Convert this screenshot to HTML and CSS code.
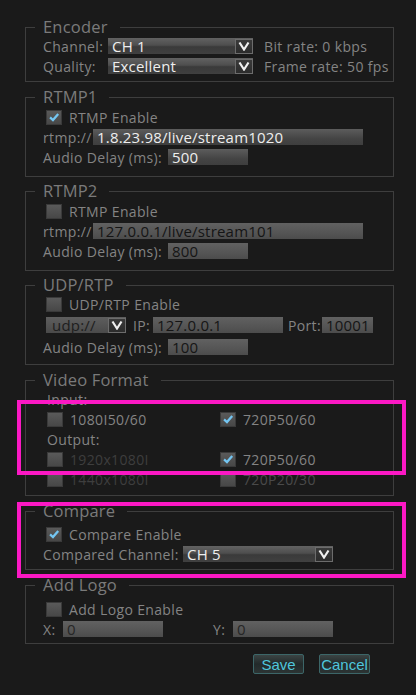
FILE: index.html
```html
<!DOCTYPE html>
<html>
<head>
<meta charset="utf-8">
<link rel="stylesheet" href="styles.css">
</head>
<body>
<div class="panel">
  <fieldset class="group g-enc">
    <legend>Encoder</legend>
    <div class="row">
      <span class="lbl w-ch">Channel:</span>
      <div class="select s-enc"><span class="val">CH 1</span><span class="arrow"><svg viewBox="0 0 12 10" width="12" height="10"><path d="M1.5 1.5 L6 8.5 L10.5 1.5" fill="none" stroke="#f0f0f0" stroke-width="2.2"/></svg></span></div>
      <span class="lbl info">Bit rate: 0 kbps</span>
    </div>
    <div class="row">
      <span class="lbl w-ch">Quality:</span>
      <div class="select s-enc"><span class="val">Excellent</span><span class="arrow"><svg viewBox="0 0 12 10" width="12" height="10"><path d="M1.5 1.5 L6 8.5 L10.5 1.5" fill="none" stroke="#f0f0f0" stroke-width="2.2"/></svg></span></div>
      <span class="lbl info">Frame rate: 50 fps</span>
    </div>
  </fieldset>

  <fieldset class="group g-rtmp">
    <legend>RTMP1</legend>
    <div class="row chkrow"><span class="chk on"><svg viewBox="0 0 16 16" width="16" height="16"><path d="M3.5 8.5 L6.8 11.5 L12.8 4.5" fill="none" stroke="#74c6f2" stroke-width="2.6"/></svg></span><span class="lbl">RTMP Enable</span></div>
    <div class="row"><span class="lbl w-rtmp">rtmp://</span><div class="input i-url"><span class="val">1.8.23.98/live/stream1020</span></div></div>
    <div class="row"><span class="lbl w-ad">Audio Delay (ms):</span><div class="input i-ad"><span class="val">500</span></div></div>
  </fieldset>

  <fieldset class="group g-rtmp">
    <legend>RTMP2</legend>
    <div class="row chkrow"><span class="chk"></span><span class="lbl">RTMP Enable</span></div>
    <div class="row"><span class="lbl w-rtmp">rtmp://</span><div class="input i-url off"><span class="val">127.0.0.1/live/stream101</span></div></div>
    <div class="row"><span class="lbl w-ad">Audio Delay (ms):</span><div class="input i-ad off"><span class="val">800</span></div></div>
  </fieldset>

  <fieldset class="group g-udp">
    <legend>UDP/RTP</legend>
    <div class="row chkrow"><span class="chk"></span><span class="lbl">UDP/RTP Enable</span></div>
    <div class="row r22">
      <div class="select s-udp off"><span class="val">udp://</span><span class="arrow"><svg viewBox="0 0 12 10" width="12" height="10"><path d="M1.5 1.5 L6 8.5 L10.5 1.5" fill="none" stroke="#f0f0f0" stroke-width="2.2"/></svg></span></div>
      <span class="lbl w-ip">IP:</span>
      <div class="input i-ip off"><span class="val">127.0.0.1</span></div>
      <span class="lbl w-port">Port:</span>
      <div class="input i-port off"><span class="val">10001</span></div>
    </div>
    <div class="row r22"><span class="lbl w-ad">Audio Delay (ms):</span><div class="input i-ad off"><span class="val">100</span></div></div>
  </fieldset>

  <fieldset class="group g-vf">
    <legend>Video Format</legend>
    <div class="row sub"><span class="lbl">Input:</span></div>
    <div class="row cols">
      <div class="col"><span class="chk"></span><span class="lbl">1080I50/60</span></div>
      <div class="col"><span class="chk on"><svg viewBox="0 0 16 16" width="16" height="16"><path d="M3.5 8.5 L6.8 11.5 L12.8 4.5" fill="none" stroke="#74c6f2" stroke-width="2.6"/></svg></span><span class="lbl">720P50/60</span></div>
    </div>
    <div class="row sub"><span class="lbl">Output:</span></div>
    <div class="row cols">
      <div class="col"><span class="chk"></span><span class="lbl dis">1920x1080I</span></div>
      <div class="col"><span class="chk on"><svg viewBox="0 0 16 16" width="16" height="16"><path d="M3.5 8.5 L6.8 11.5 L12.8 4.5" fill="none" stroke="#74c6f2" stroke-width="2.6"/></svg></span><span class="lbl">720P50/60</span></div>
    </div>
    <div class="row cols">
      <div class="col"><span class="chk"></span><span class="lbl dis">1440x1080I</span></div>
      <div class="col"><span class="chk"></span><span class="lbl dis2">720P20/30</span></div>
    </div>
  </fieldset>

  <fieldset class="group g-cmp">
    <legend>Compare</legend>
    <div class="row chkrow"><span class="chk on"><svg viewBox="0 0 16 16" width="16" height="16"><path d="M3.5 8.5 L6.8 11.5 L12.8 4.5" fill="none" stroke="#74c6f2" stroke-width="2.6"/></svg></span><span class="lbl">Compare Enable</span></div>
    <div class="row"><span class="lbl w-cmp">Compared Channel:</span><div class="select s-cmp"><span class="val">CH 5</span><span class="arrow"><svg viewBox="0 0 12 10" width="12" height="10"><path d="M1.5 1.5 L6 8.5 L10.5 1.5" fill="none" stroke="#f0f0f0" stroke-width="2.2"/></svg></span></div></div>
  </fieldset>

  <fieldset class="group g-logo">
    <legend>Add Logo</legend>
    <div class="row chkrow"><span class="chk"></span><span class="lbl">Add Logo Enable</span></div>
    <div class="row">
      <span class="lbl w-x">X:</span><div class="input i-xy off"><span class="val">0</span></div>
      <span class="lbl w-y">Y:</span><div class="input i-xy off"><span class="val">0</span></div>
    </div>
  </fieldset>

  <div class="buttons">
    <button class="btn">Save</button>
    <button class="btn">Cancel</button>
  </div>
</div>
<div class="mark m1"></div>
<div class="mark m2"></div>
</body>
</html>
```

FILE: styles.css
```css
* { box-sizing: border-box; }
html, body { margin: 0; padding: 0; }
body {
  background: #1a1a1a;
  width: 416px;
  height: 695px;
  overflow: hidden;
  font-family: "Open Sans", "DejaVu Sans", sans-serif;
  color: #858585;
  position: relative;
}
.panel {
  padding: 18px 0 0 25px;
  width: 394px;
}
.group {
  margin: 0 0 6px 0;
  border: 1px solid #3e3e3e;
  padding: 0 0 5px 9px;
  min-width: 0;
  width: 369px;
}
.group > .row { margin-left: 8px; }
.group legend {
  font-size: 16.5px;
  line-height: 18px;
  height: 18px;
  color: #7a7a7a;
  letter-spacing: 0.2px;
  padding: 0 12px 0 8px;
  margin-left: 0;
}
.g-rtmp { padding-top: 1px; padding-bottom: 9px; margin-bottom: 5px; }
.g-udp { padding-top: 0; padding-bottom: 6px; }
.g-vf { padding-top: 0; padding-bottom: 6px; }
.g-cmp { padding-top: 4px; padding-bottom: 5px; }
.g-logo { padding-top: 5px; padding-bottom: 4px; }

.row {
  display: flex;
  align-items: center;
  height: 20px;
}
.r22 { height: 22px; }
.lbl {
  font-size: 14px;
  letter-spacing: 0.35px;
  white-space: nowrap;
  color: #848484;
}
.chkrow { padding-left: 3px; }
.chk {
  width: 16px;
  height: 15px;
  flex: none;
  background: linear-gradient(#5a5a5a, #474747);
  border: 1px solid #3a3a3a;
  margin-right: 7px;
  display: flex;
  align-items: center;
  justify-content: center;
  overflow: hidden;
}
.chk svg { display: block; }

.w-ch { width: 65px; }
.w-rtmp { width: 50px; }
.w-ad { width: 125px; }
.w-ip { width: 27px; padding-left: 7px; }
.w-port { width: 39px; padding-left: 5px; }
.w-cmp { width: 140px; }
.w-x { width: 20px; }
.w-y { width: 20px; margin-left: 50px; }
.info { margin-left: 11px; }

.select, .input {
  height: 16px;
  display: flex;
  align-items: center;
  background: linear-gradient(#626262, #4e4e4e 45%, #3a3a3a 55%, #404040);
  position: relative;
  flex: none;
}
.input { background: linear-gradient(#5c5c5c, #444 60%, #3e3e3e); }
.val {
  font-size: 15px;
  font-weight: 400;
  letter-spacing: 0.2px;
  color: #eeeeee;
  padding-left: 4px;
  white-space: nowrap;
  line-height: 16px;
  flex: 1;
}
.off .val { color: #151515; }
.input.off { background: linear-gradient(#616161, #555 60%, #4c4c4c); }
.arrow {
  width: 18px;
  height: 15px;
  flex: none;
  background: linear-gradient(#3a3a3a, #2c2c2c);
  border: 1px solid #6c6c6c;
  display: flex;
  align-items: center;
  justify-content: center;
}
.arrow svg { display: block; }
.s-enc { width: 145px; }
.s-udp { width: 80px; margin-left: 3px; background: linear-gradient(#5e5e5e, #4a4a4a); }
.s-udp .val { color: #1e1e1e; padding-left: 6px; }
.s-cmp { width: 150px; }
.i-url { width: 270px; }
.i-ad { width: 80px; }
.i-ip { width: 130px; }
.i-port { width: 51px; }
.i-xy { width: 100px; }
.i-xy .val { color: #262626; }

.sub { padding-left: 4px; }
.cols { padding-left: 4px; }
.col { display: flex; align-items: center; width: 177px; }
.lbl.dis { color: #3e3e3e; }
.lbl.dis2 { color: #4a4a4a; }

.buttons {
  display: flex;
  gap: 15px;
  padding-left: 228px;
  margin-top: 10px;
}
.btn {
  width: 51px;
  height: 20px;
  padding: 0;
  font-family: "Liberation Sans", Arial, sans-serif;
  font-size: 15px;
  color: #4fc6dc;
  background: linear-gradient(#3b4444, #222a2a 50%, #2c3434);
  border: 1px solid #3c6668;
  border-radius: 2px;
}

.mark {
  position: absolute;
  left: 17px;
  width: 389px;
  border: 4px solid #fb18c4;
  pointer-events: none;
}
.m1 { top: 400px; height: 75px; }
.m2 { top: 502px; height: 76px; }
```
